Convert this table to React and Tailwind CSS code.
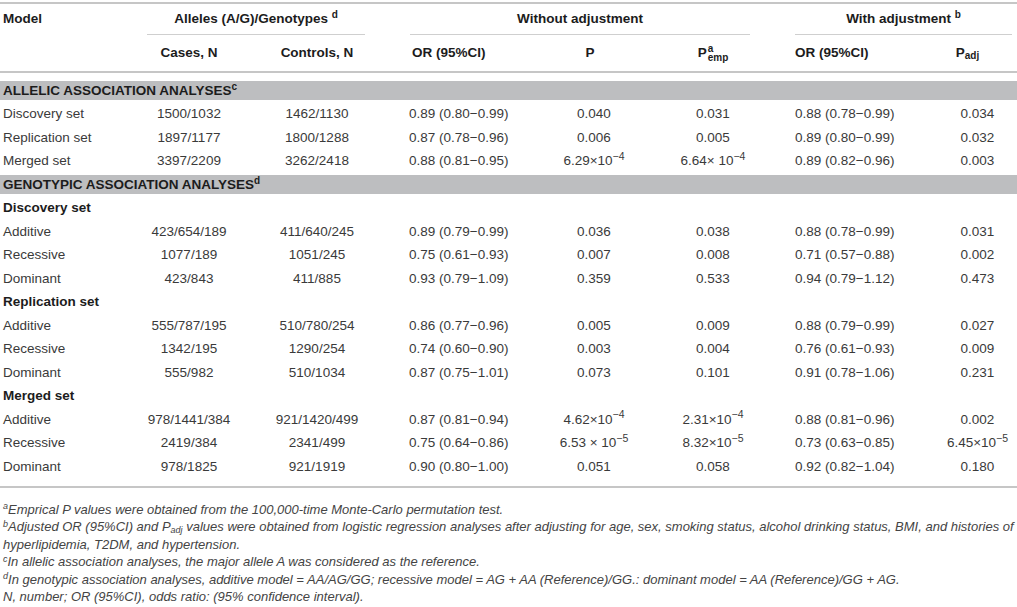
const cols = 'grid grid-cols-[126px_126px_130px_154px_116px_122px_164px_79px]'

const Sci = ({ m, e, sp }) => (
  <span>
    {m}
    {sp ? ' × ' : '×'}
    10<sup className="text-[10.5px]">{e}</sup>
  </span>
)

const allelic = [
  ['Discovery set', '1500/1032', '1462/1130', '0.89 (0.80−0.99)', '0.040', '0.031', '0.88 (0.78−0.99)', '0.034'],
  ['Replication set', '1897/1177', '1800/1288', '0.87 (0.78−0.96)', '0.006', '0.005', '0.89 (0.80−0.99)', '0.032'],
  ['Merged set', '3397/2209', '3262/2418', '0.88 (0.81−0.95)', <Sci m="6.29" e="−4" />, <span>6.64× 10<sup className="text-[10.5px]">−4</sup></span>, '0.89 (0.82−0.96)', '0.003'],
]

const genotypic = [
  {
    title: 'Discovery set',
    rows: [
      ['Additive', '423/654/189', '411/640/245', '0.89 (0.79−0.99)', '0.036', '0.038', '0.88 (0.78−0.99)', '0.031'],
      ['Recessive', '1077/189', '1051/245', '0.75 (0.61−0.93)', '0.007', '0.008', '0.71 (0.57−0.88)', '0.002'],
      ['Dominant', '423/843', '411/885', '0.93 (0.79−1.09)', '0.359', '0.533', '0.94 (0.79−1.12)', '0.473'],
    ],
  },
  {
    title: 'Replication set',
    rows: [
      ['Additive', '555/787/195', '510/780/254', '0.86 (0.77−0.96)', '0.005', '0.009', '0.88 (0.79−0.99)', '0.027'],
      ['Recessive', '1342/195', '1290/254', '0.74 (0.60−0.90)', '0.003', '0.004', '0.76 (0.61−0.93)', '0.009'],
      ['Dominant', '555/982', '510/1034', '0.87 (0.75−1.01)', '0.073', '0.101', '0.91 (0.78−1.06)', '0.231'],
    ],
  },
  {
    title: 'Merged set',
    rows: [
      ['Additive', '978/1441/384', '921/1420/499', '0.87 (0.81−0.94)', <Sci m="4.62" e="−4" />, <Sci m="2.31" e="−4" />, '0.88 (0.81−0.96)', '0.002'],
      ['Recessive', '2419/384', '2341/499', '0.75 (0.64−0.86)', <Sci m="6.53" e="−5" sp />, <Sci m="8.32" e="−5" />, '0.73 (0.63−0.85)', <Sci m="6.45" e="−5" />],
      ['Dominant', '978/1825', '921/1919', '0.90 (0.80−1.00)', '0.051', '0.058', '0.92 (0.82−1.04)', '0.180'],
    ],
  },
]

const Row = ({ r }) => (
  <div className={`${cols} h-[23.5px] items-center whitespace-nowrap`}>
    <div className="pl-[3px]">{r[0]}</div>
    <div className="text-center">{r[1]}</div>
    <div className="text-center">{r[2]}</div>
    <div className="pl-[27px]">{r[3]}</div>
    <div className="text-center">{r[4]}</div>
    <div className="text-center">{r[5]}</div>
    <div className="pl-[21px]">{r[6]}</div>
    <div className="text-center">{r[7]}</div>
  </div>
)

const Band = ({ label, sup }) => (
  <div className="h-[23.5px] flex items-center">
    <div className="w-full h-[19px] bg-[#bdbec0] flex items-center pl-[3px] font-bold text-[#1c1c1c]">
      <span>
        {label}
        <sup className="text-[10px]">{sup}</sup>
      </span>
    </div>
  </div>
)

const SubHead = ({ children }) => (
  <div className="h-[23.5px] flex items-center pl-[3px] font-bold text-[#1c1c1c]">{children}</div>
)

export default function App() {
  return (
    <div className="w-[1017px] h-[607px] overflow-hidden bg-white text-[#3a3a3a] text-[13.5px] font-['Liberation_Sans',Arial,sans-serif]">
      <div className="mt-[2px] h-[2px] bg-[#c6c6c6]" />

      {/* header */}
      <div className={`${cols} h-[31px] font-bold text-[#1c1c1c]`}>
        <div className="pl-[3px] flex items-center">Model</div>
        <div className="col-span-2 flex items-center justify-center ml-[21px] mr-[17px] border-b-[1.5px] border-[#cfcfcf]">
          <span>Alleles (A/G)/Genotypes <sup className="text-[10px]">d</sup></span>
        </div>
        <div className="col-span-3 flex items-center justify-center ml-[28px] mr-[24px] border-b-[1.5px] border-[#cfcfcf]">
          Without adjustment
        </div>
        <div className="col-span-2 flex items-center justify-center ml-[21px] mr-[5px] border-b-[1.5px] border-[#cfcfcf]">
          <span>With adjustment <sup className="text-[10px]">b</sup></span>
        </div>
      </div>
      <div className={`${cols} h-[36px] items-center font-bold text-[#1c1c1c] whitespace-nowrap`}>
        <div />
        <div className="text-center">Cases, N</div>
        <div className="text-center">Controls, N</div>
        <div className="pl-[30px]">OR (95%CI)</div>
        <div className="text-center pr-[8px]">P</div>
        <div className="flex justify-center">
          <span className="inline-flex items-center">
            P
            <span className="inline-flex flex-col leading-[9px] text-[10px] ml-[1px]">
              <span>a</span>
              <span>emp</span>
            </span>
          </span>
        </div>
        <div className="pl-[21px]">OR (95%CI)</div>
        <div className="pr-[20px] text-center">
          P<sub className="text-[10px]">adj</sub>
        </div>
      </div>
      <div className="h-[2px] bg-[#c6c6c6]" />

      {/* body */}
      <div className="mt-[6px]">
        <Band label="ALLELIC ASSOCIATION ANALYSES" sup="c" />
        {allelic.map((r, i) => (
          <Row key={i} r={r} />
        ))}
        <Band label="GENOTYPIC ASSOCIATION ANALYSES" sup="d" />
        {genotypic.map(g => (
          <div key={g.title}>
            <SubHead>{g.title}</SubHead>
            {g.rows.map((r, i) => (
              <Row key={i} r={r} />
            ))}
          </div>
        ))}
      </div>
      <div className="mt-[7px] h-[2px] bg-[#c6c6c6]" />

      {/* footnotes */}
      <div className="mt-[13px] pl-[3px] italic text-[13px] leading-[17.5px] text-[#444] whitespace-nowrap">
        <div><sup className="text-[9px]">a</sup>Emprical P values were obtained from the 100,000-time Monte-Carlo permutation test.</div>
        <div>
          <sup className="text-[9px]">b</sup>Adjusted OR (95%CI) and P<sub className="text-[9px]">adj</sub> values were obtained from logistic regression analyses after adjusting for age, sex, smoking status, alcohol drinking status, BMI, and histories of
          <br />
          hyperlipidemia, T2DM, and hypertension.
        </div>
        <div><sup className="text-[9px]">c</sup>In allelic association analyses, the major allele A was considered as the reference.</div>
        <div><sup className="text-[9px]">d</sup>In genotypic association analyses, additive model = AA/AG/GG; recessive model = AG + AA (Reference)/GG.: dominant model = AA (Reference)/GG + AG.</div>
        <div>N, number; OR (95%CI), odds ratio: (95% confidence interval).</div>
      </div>
    </div>
  )
}
